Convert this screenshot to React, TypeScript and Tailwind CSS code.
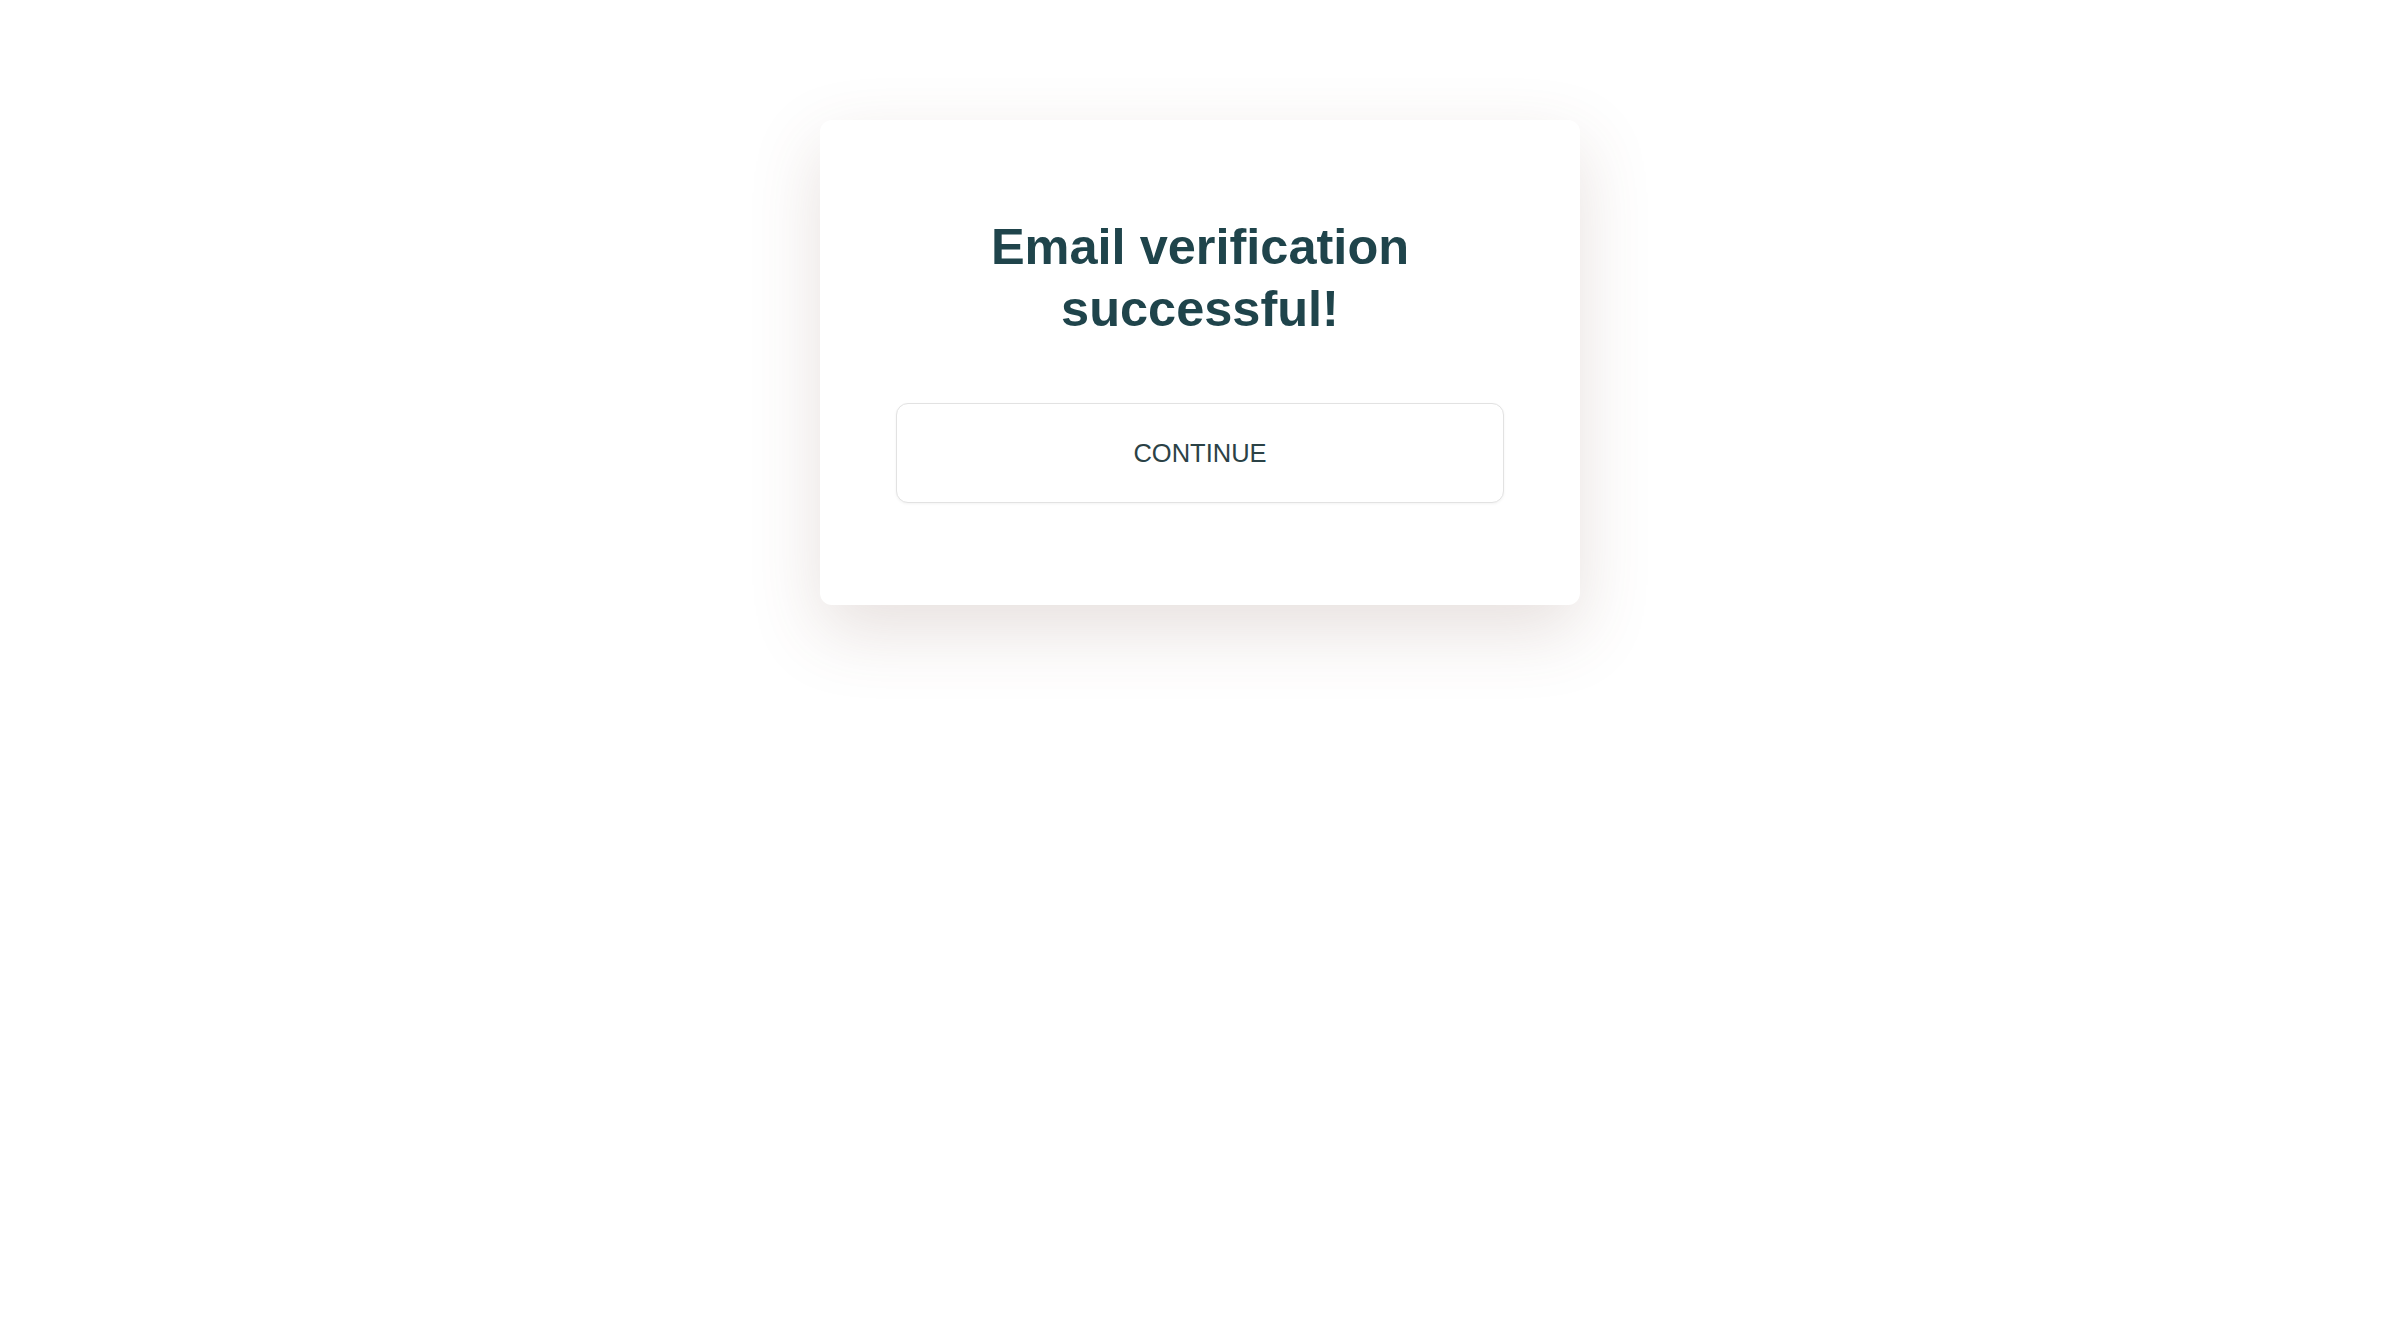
export default function App() {
  return (
    <div className="min-h-screen w-full bg-white font-['Liberation_Sans',Arial,sans-serif]">
      <div className="flex justify-center pt-[120px]">
        <div className="w-[760px] rounded-[12px] bg-white px-[76px] pt-[96px] pb-[102px] shadow-[0_26px_70px_rgba(110,70,60,0.17)]">
          <h1 className="text-center text-[50.5px] leading-[62px] font-bold text-[#1f444b]">
            Email verification
            <br />
            successful!
          </h1>
          <button
            type="button"
            className="mt-[63px] flex h-[100px] w-full items-center justify-center rounded-[12px] border-[1.5px] border-[#e2e2e2] bg-white text-[25.5px] text-[#2b4246] shadow-[0_1px_3px_rgba(0,0,0,0.05)]"
          >
            CONTINUE
          </button>
        </div>
      </div>
    </div>
  )
}
